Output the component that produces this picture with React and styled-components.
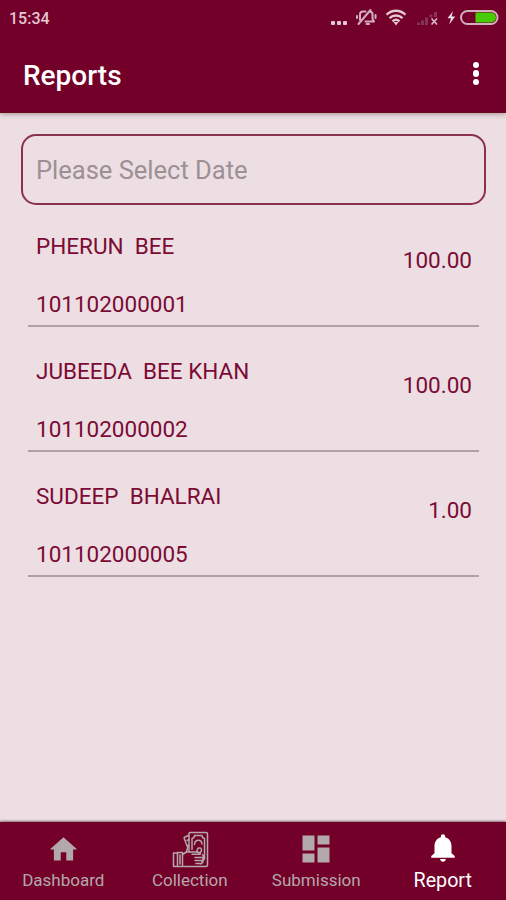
import React from "react";
import styled, { createGlobalStyle } from "styled-components";

const reports = [
  { id: "101102000001", name: "PHERUN  BEE", amount: "100.00" },
  { id: "101102000002", name: "JUBEEDA  BEE KHAN", amount: "100.00" },
  { id: "101102000005", name: "SUDEEP  BHALRAI", amount: "1.00" },
];

function StatusIcons() {
  return (
    <svg width="170" height="24" viewBox="330 6 170 24" fill="none">
      <g fill="#e3c9d2">
        <rect x="331" y="21" width="4" height="4" rx="1" />
        <rect x="337" y="21" width="4" height="4" rx="1" />
        <rect x="343" y="21" width="4" height="4" rx="1" />
      </g>
      {/* muted bell */}
      <g stroke="#d3afbd" strokeWidth="2" strokeLinecap="round" strokeLinejoin="round">
        <path d="M360 20v-5.500q0-3 3-3h2.500M370 11.500q2.500.5 2.500 3v4.500l1.500 2.500h-8.500" />
        <path d="M357 16v2M375.500 15v3M366.500 24h2.500" />
        <path d="M358.500 24L370.500 10" />
      </g>
      {/* wifi */}
      <g stroke="#e3c9d2" strokeWidth="2.300">
        <path d="M386.500 14.800c5.500-5.400 13.500-5.400 19 0" />
        <path d="M389.500 18.200c3.800-3.600 9.200-3.600 13 0" />
        <path d="M392.500 21.400c2.100-1.900 4.900-1.900 7 0" />
      </g>
      <path d="M393.500 22h5L396 25.500z" fill="#e3c9d2" />
      {/* no signal */}
      <g fill="#85335a">
        <rect x="417" y="22.500" width="3" height="2.500" />
        <rect x="421" y="20.500" width="3" height="4.500" />
        <rect x="425" y="17.500" width="3" height="7.500" />
        <rect x="429.500" y="14.500" width="3" height="3" />
        <rect x="434" y="12" width="3" height="5" />
      </g>
      <path d="M431.500 18.500l5.500 6M437 18.500l-5.500 6" stroke="#dcbcc8" strokeWidth="1.600" />
      <path d="M453 11l-5.500 7.200h3.500l-1.800 6.300 6-8h-3.600z" fill="#f0dfe5" />
      <rect x="461" y="11" width="36.500" height="13" rx="6.500" stroke="#d3afbd" strokeWidth="2" />
      <path d="M475.500 12.500h15.500a5 5 0 0 1 0 10h-15.500z" fill="#46cb05" />
    </svg>
  );
}

function HomeIcon() {
  return (
    <svg width="33" height="33" viewBox="0 0 24 24" fill="currentColor">
      <path d="M10 20v-6h4v6h5v-8h3L12 3 2 12h3v8z" />
    </svg>
  );
}

function CashIcon() {
  return (
    <svg width="38" height="38" viewBox="171 830 38 38" fill="none" stroke="currentColor" strokeWidth="1.500" strokeLinejoin="round" strokeLinecap="round">
      <path d="M189 852v-18.500q0-1 1-1h16q1.500 0 1.500 1.500v31q0 1.500-1.500 1.500h-22.500" />
      <path d="M192 849.500v-11q2.500-.5 2.500-3h7.500q0 2.500 2.500 3v20.500q-2 .5-2.500 3" />
      <path d="M194.500 844.500c.5-5.500 7-5.500 7.500-.5M197.500 852.500c-2-5 4-6 4-2.500 0 1.500-1.500 2.500-1.500 4" />
      <path d="M188.500 835.500l-3.500 1.500q-1.200.5-.8 1.500l3.300 8.500M187 840.500l2-1M188.500 845l-2 6.500" />
      <path d="M173.500 853h4v13.500h-4zM177.500 852.500h5v14h-5zM180 855v9" />
      <path d="M182.500 854.500l4-2.500h10.500q3 0 3 2.300h-8M195 857.500h7.500M195 860.500h7M196 863.500h5M202.500 854.500q2 2 .5 4.500q1 3-2 5" />
    </svg>
  );
}

function BoardIcon() {
  return (
    <svg width="36" height="36" viewBox="0 0 24 24" fill="currentColor">
      <path d="M3 13h8V3H3v10zm0 8h8v-6H3v6zm10 0h8V11h-8v10zm0-18v6h8V3h-8z" />
    </svg>
  );
}

function BellIcon() {
  return (
    <svg width="34" height="34" viewBox="0 0 24 24" fill="currentColor">
      <path d="M12 21c1.100 0 2-.9 2-2h-4c0 1.100.89 2 2 2zm6-6v-5c0-3.070-1.640-5.640-4.500-6.320V3c0-.83-.67-1.500-1.500-1.500s-1.500.67-1.500 1.500v.68C7.630 4.360 6 6.920 6 10v5l-2.300 2v1.200h16.600v-1.200l-2.300-2z" />
    </svg>
  );
}

const tabs = [
  { label: "Dashboard", icon: <HomeIcon /> },
  { label: "Collection", icon: <CashIcon /> },
  { label: "Submission", icon: <BoardIcon /> },
  { label: "Report", icon: <BellIcon />, active: true },
];

function App() {
  return (
    <Screen>
      <GlobalStyle />
      <Header>
        <StatusBar>
          <Clock>15:34</Clock>
          <StatusIcons />
        </StatusBar>
        <Toolbar>
          <Title>Reports</Title>
          <MenuButton aria-label="More options">
            <Dot />
            <Dot />
            <Dot />
          </MenuButton>
        </Toolbar>
      </Header>
      <Content>
        <DateInput placeholder="Please Select Date" readOnly />
        <ReportList>
          {reports.map((report) => (
            <ReportRow key={report.id}>
              <div>
                <Name>{report.name}</Name>
                <AccountNo>{report.id}</AccountNo>
              </div>
              <Amount>{report.amount}</Amount>
            </ReportRow>
          ))}
        </ReportList>
      </Content>
      <BottomNav>
        {tabs.map((tab) => (
          <Tab key={tab.label} $active={tab.active}>
            <TabIcon>{tab.icon}</TabIcon>
            <TabLabel $active={tab.active}>{tab.label}</TabLabel>
          </Tab>
        ))}
      </BottomNav>
    </Screen>
  );
}

const GlobalStyle = createGlobalStyle`
  * {
    box-sizing: border-box;
  }

  body {
    margin: 0;
    font-family: Roboto, "Liberation Sans", sans-serif;
  }
`;

const Screen = styled.div`
  display: flex;
  flex-direction: column;
  height: 900px;
  overflow: hidden;
  background-color: #ecdee2;
`;

const Header = styled.header`
  height: 113px;
  flex-shrink: 0;
  background-color: #730029;
  border-bottom: 1px solid #6b0a1c;
  box-shadow: 0 1px 5px rgba(60, 30, 50, 0.4);
`;

const StatusBar = styled.div`
  display: flex;
  align-items: center;
  justify-content: space-between;
  height: 36px;
  padding: 0 6px 0 9px;
`;

const Clock = styled.span`
  font-size: 16px;
  font-weight: 500;
  color: #e3c9d2;
`;

const Toolbar = styled.div`
  display: flex;
  align-items: center;
  justify-content: space-between;
  height: 76px;
  padding: 3px 27px 0 23px;
`;

const Title = styled.h1`
  margin: 0;
  font-size: 28px;
  font-weight: 500;
  color: white;
`;

const MenuButton = styled.button`
  display: flex;
  flex-direction: column;
  gap: 2px;
  padding: 0;
  margin-top: -4px;
  border: none;
  background: none;
`;

const Dot = styled.span`
  width: 6.500px;
  height: 6.500px;
  border-radius: 50%;
  background-color: white;
`;

const Content = styled.main`
  flex: 1;
  padding: 21px 20px 0 21px;
`;

const DateInput = styled.input`
  display: block;
  width: 100%;
  height: 71px;
  padding: 1px 13px 0;
  border: 2px solid #8a3050;
  border-radius: 15px;
  background: none;
  font-family: inherit;
  font-size: 25.500px;
  outline: none;

  &::placeholder {
    color: #9c9095;
    opacity: 1;
  }
`;

const ReportList = styled.ul`
  margin: 0;
  padding: 0 7px;
  list-style: none;
`;

const ReportRow = styled.li`
  display: flex;
  justify-content: space-between;
  height: 125px;
  padding: 31px 7px 0 8px;
  border-bottom: 2px solid #b0a1a6;
  color: #7b0a35;
  font-size: 22.500px;
  line-height: 26px;

  &:first-child {
    height: 122px;
    padding-top: 28px;
  }
`;

const Name = styled.p`
  margin: 0;
  white-space: pre;
`;

const AccountNo = styled.p`
  margin: 32px 0 0;
`;

const Amount = styled.span`
  margin-top: 14px;
`;

const BottomNav = styled.nav`
  display: flex;
  height: 78px;
  flex-shrink: 0;
  background-color: #730029;
  box-shadow: 0 -1px 2px rgba(60, 30, 50, 0.6);
`;

const Tab = styled.div`
  flex: 1;
  display: flex;
  flex-direction: column;
  align-items: center;
  color: ${(props) => (props.$active ? "white" : "#b3a8ab")};
`;

const TabIcon = styled.div`
  display: flex;
  align-items: center;
  justify-content: center;
  height: 38px;
  margin-top: 8px;
`;

const TabLabel = styled.span`
  margin-top: ${(props) => (props.$active ? "2px" : "1px")};
  font-size: ${(props) => (props.$active ? "19.700px" : "17px")};
  line-height: 22px;
`;

export default App;
